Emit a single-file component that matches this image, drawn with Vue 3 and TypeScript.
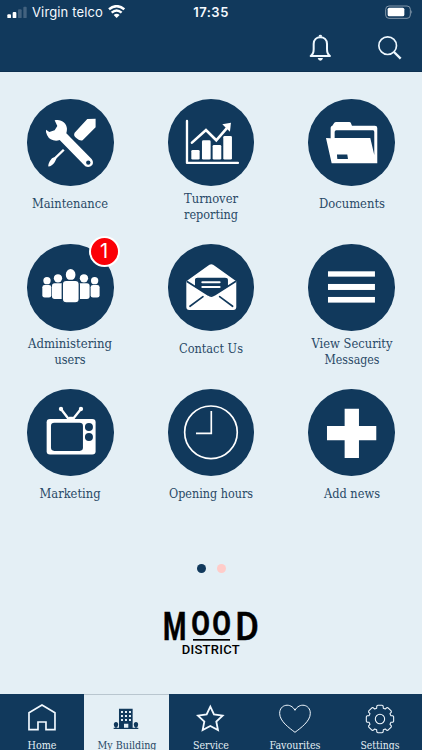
<script setup lang="ts">
interface Tile {
  id: string
  lines: string[]
  box: string
  widths: number[]
  badge?: number
}

interface Tab {
  id: string
  label: string
  box: string
  width: number
}

const tiles: Tile[] = [
  { id: 'maintenance', lines: ['Maintenance'], box: '81 27 260 260', widths: [76] },
  { id: 'turnover', lines: ['Turnover', 'reporting'], box: '81 27 260 260', widths: [54, 54] },
  { id: 'documents', lines: ['Documents'], box: '78 27 260 260', widths: [66] },
  { id: 'users', lines: ['Administering', 'users'], box: '81 37 260 260', widths: [84, 31], badge: 1 },
  { id: 'contact', lines: ['Contact Us'], box: '81 37 260 260', widths: [64] },
  { id: 'security', lines: ['View Security', 'Messages'], box: '78 37 260 260', widths: [81, 55] },
  { id: 'marketing', lines: ['Marketing'], box: '81 27 260 260', widths: [61] },
  { id: 'hours', lines: ['Opening hours'], box: '504 27 260 260', widths: [84] },
  { id: 'news', lines: ['Add news'], box: '291 27 260 260', widths: [56] },
]

const tabs: Tab[] = [
  { id: 'home', label: 'Home', box: '0 28 253 120', width: 29 },
  { id: 'building', label: 'My Building', box: '253 28 253 120', width: 59 },
  { id: 'service', label: 'Service', box: '506 28 253 120', width: 36 },
  { id: 'favourites', label: 'Favourites', box: '759 28 253 120', width: 51 },
  { id: 'settings', label: 'Settings', box: '1012 28 253 120', width: 39 },
]

const active = 'building'

const gear = (() => {
  const points: string[] = []
  const step = Math.PI / 4
  for (let i = 0; i < 8; i++) {
    const a = i * step
    const at = (r: number, o: number) =>
      `${(1138 + r * Math.sin(a + o)).toFixed(1)},${(103 - r * Math.cos(a + o)).toFixed(1)}`
    points.push(at(34, -0.3), at(40, -0.24), at(41.5, -0.16), at(41.5, 0.16), at(40, 0.24), at(34, 0.3))
  }
  return points.join(' ')
})()
</script>

<template>
  <div class="screen">
    <header>
      <div class="status">
        <div class="carrier">
          <svg class="signal" viewBox="22 16 60 38">
            <rect x="23" y="41" width="11" height="12" rx="3" fill="#fff" />
            <rect x="39" y="34" width="11" height="19" rx="3" fill="#fff" />
            <rect x="55" y="26" width="11" height="27" rx="3" fill="#43627f" />
            <rect x="71" y="18" width="10" height="35" rx="3" fill="#43627f" />
          </svg>
          <span>Virgin telco</span>
          <svg class="wifi" viewBox="325 14 52 40">
            <g fill="none" stroke="#fff" stroke-width="7.5">
              <path d="M328 27Q351 8 374 27" />
              <path d="M336 37Q351 24 366 37" />
            </g>
            <path d="M342 44Q351 37 360 44L351 53Z" fill="#fff" />
          </svg>
        </div>
        <span class="time">17:35</span>
        <svg class="battery" viewBox="530 14 84 42">
          <rect x="532" y="17" width="74" height="37" rx="10" fill="none" stroke="#8297aa" stroke-width="3" />
          <rect x="538" y="22" width="50" height="26" rx="5" fill="#fff" />
          <path d="M609 29Q614 35 609 41Z" fill="#8297aa" />
        </svg>
      </div>
      <div class="tools">
        <svg class="bell" viewBox="294 102 68 81" fill="none" stroke="#eef8ff" stroke-width="6">
          <path d="M299 168Q308 162 308 148V132C308 119 317 112 328 112S348 119 348 132V148Q348 162 357 168Z" stroke-linejoin="round" />
          <path d="M323 110V108Q323 104 328 104T333 108V110ZM320 174H336Q334 182 328 182T320 174Z" fill="#eef8ff" stroke="none" />
        </svg>
        <svg class="search" viewBox="498 105 75 76" fill="none" stroke="#eef8ff">
          <circle cx="530" cy="137" r="26.5" stroke-width="5" />
          <path d="M549 156L569 176" stroke-width="7" />
        </svg>
      </div>
    </header>

    <main>
      <section class="grid">
        <article v-for="t in tiles" :key="t.id" class="tile">
          <div class="disc">
            <svg :viewBox="t.box" fill="#fff">
              <template v-if="t.id === 'maintenance'">
                <path d="M164 91C183 86 200 99 201 116Q201 124 199 130L275 207Q282 216 277 225Q268 235 256 229L179 150Q170 154 160 151Q143 147 138 126V119L148 126L164 121L172 108Z" />
                <path d="M224 128L262 87L287 86V112L248 151Q240 154 230 145Q219 137 224 128Z" />
                <path d="M194 182L170 205L164 217Q156 229 145 230Q144 219 156 205L164 201L189 177Z" />
                <circle cx="265" cy="218" r="6.5" fill="#11395c" />
              </template>
              <template v-else-if="t.id === 'turnover'">
                <path d="M138 93V219H291" fill="none" stroke="#fff" stroke-width="7" stroke-linecap="round" stroke-linejoin="round" />
                <rect x="151" y="180" width="25" height="29" rx="4" />
                <rect x="183" y="151" width="26" height="58" rx="4" />
                <rect x="215" y="165" width="26" height="44" rx="4" />
                <rect x="247" y="138" width="26" height="71" rx="4" />
                <path d="M153 158L195 120L226 151L261 111" fill="none" stroke="#fff" stroke-width="8" stroke-linecap="round" />
                <path d="M244 103L270 98L267 125Z" />
              </template>
              <template v-else-if="t.id === 'documents'">
                <path d="M146 145V113Q146 109 151 107L156 100Q158 96 163 96H202Q206 96 207 100L210 107H279Q286 107 286 114V220H149L132 144ZM158 144H265L277 195V126Q277 122 273 121H163Q158 121 158 126Z" fill-rule="evenodd" />
                <path d="M165 194H196L198 207H166Z" fill="#11395c" />
              </template>
              <template v-else-if="t.id === 'users'">
                <circle cx="141" cy="147" r="11" /><circle cx="284" cy="147" r="11" />
                <circle cx="174" cy="140" r="12.5" /><circle cx="252" cy="140" r="12.5" />
                <ellipse cx="212" cy="129" rx="14.5" ry="17" />
                <rect x="127" y="160" width="27" height="38" rx="7" />
                <rect x="272" y="160" width="27" height="38" rx="7" />
                <rect x="156" y="155" width="38" height="47" rx="8" />
                <rect x="231" y="155" width="38" height="47" rx="8" />
                <rect x="187" y="146" width="51" height="68" rx="12" stroke="#11395c" stroke-width="4" />
              </template>
              <template v-else-if="t.id === 'contact'">
                <path d="M136 149L200 103Q211 93 222 103L286 149V226Q286 235 277 235H145Q136 235 136 226Z" />
                <path d="M137 149L202 190Q211 197 220 190L285 149" fill="none" stroke="#11395c" stroke-width="5" />
                <path d="M162 145Q162 138 170 138H252Q261 138 261 145V165L221 189Q211 196 201 189L162 165Z" fill="#11395c" />
                <path d="M184 152H236M184 166H236" stroke="#fff" stroke-width="6" stroke-linecap="round" />
                <path d="M186 195L147 224M236 195L275 224" stroke="#11395c" stroke-width="5" stroke-linecap="round" />
              </template>
              <template v-else-if="t.id === 'security'">
                <rect x="138" y="119" width="141" height="16" />
                <rect x="138" y="157" width="141" height="18" />
                <rect x="138" y="196" width="141" height="17" />
              </template>
              <template v-else-if="t.id === 'marketing'">
                <rect x="140" y="117" width="147" height="107" rx="10" />
                <rect x="153" y="128" width="96" height="85" rx="10" fill="#11395c" />
                <circle cx="267" cy="141" r="12" fill="#11395c" />
                <circle cx="267" cy="171" r="12" fill="#11395c" />
                <path d="M183 87L206 117M243 87L219 117" stroke="#fff" stroke-width="7" />
                <circle cx="183" cy="87" r="6.5" /><circle cx="243" cy="87" r="6.5" />
                <path d="M201 118L208 110H218L225 118Z" />
              </template>
              <template v-else-if="t.id === 'hours'">
                <circle cx="633" cy="157" r="79" fill="none" stroke="#fff" stroke-width="5" />
                <path d="M634 93V160H588" fill="none" stroke="#fff" stroke-width="5" />
              </template>
              <path v-else d="M401 86H444V138H496V181H444V234H401V181H348V138H401Z" />
            </svg>
            <span v-if="t.badge" class="badge">{{ t.badge }}</span>
          </div>
          <svg class="caption" :viewBox="`0 0 120 ${t.lines.length * 16}`" :class="{ single: t.lines.length === 1 }" :height="t.lines.length * 16">
            <text
              v-for="(line, i) in t.lines"
              :key="line"
              x="60"
              :y="11.8 + i * 16"
              text-anchor="middle"
              :textLength="t.widths[i]"
              lengthAdjust="spacingAndGlyphs"
            >{{ line }}</text>
          </svg>
        </article>
      </section>

      <div class="pager"><i class="current"></i><i></i></div>

      <svg class="brand" viewBox="66 177 294 144">
        <g class="wordmark">
          <text x="69" y="271" font-size="118" textLength="70" lengthAdjust="spacingAndGlyphs">M</text>
          <text x="154" y="254" font-size="97" textLength="56" lengthAdjust="spacingAndGlyphs">O</text>
          <text x="217" y="254" font-size="97" textLength="56" lengthAdjust="spacingAndGlyphs">O</text>
          <text class="light" x="286" y="271" font-size="118" textLength="71" lengthAdjust="spacingAndGlyphs">D</text>
        </g>
        <rect x="159" y="267" width="111" height="5" />
        <text class="district" x="125" y="311" font-size="39" textLength="174" lengthAdjust="spacing">DISTRICT</text>
      </svg>
    </main>

    <nav>
      <div v-for="tab in tabs" :key="tab.id" class="tab" :class="{ active: tab.id === active }">
        <svg class="glyph" :viewBox="tab.box" fill="none" stroke="#f2f9ff">
          <path v-if="tab.id === 'home'" d="M87 135V84L126 61L165 84V135H138V112H114V135Z" stroke-width="5" />
          <g v-else-if="tab.id === 'building'" fill="#11395c" stroke="none">
            <path d="M358 72H399V130H386V117H373V130H358Z" />
            <path d="M342 129H416V133H342ZM347 120H351V130H347ZM407 120H411V130H407Z" />
            <ellipse cx="349" cy="120" rx="6.5" ry="8" /><ellipse cx="409" cy="120" rx="6.5" ry="8" />
            <path d="M364 82H394M364 94H394M364 106H394" stroke="#e4eff5" stroke-width="6" stroke-dasharray="6 6" />
          </g>
          <path v-else-if="tab.id === 'service'" d="M630 66L641 89L667 93L648 111L653 136L630 124L607 136L612 111L593 93L619 89Z" stroke-width="5.5" />
          <path v-else-if="tab.id === 'favourites'" d="M885 143C868 130 839 110 839 86C839 58 873 53 885 77C897 53 931 58 931 86C931 110 902 130 885 143Z" stroke-width="3" />
          <g v-else stroke-width="3.2" stroke-linejoin="round">
            <polygon :points="gear" />
            <circle cx="1138" cy="103" r="14" />
          </g>
        </svg>
        <svg class="tab-label" viewBox="0 0 80 16">
          <text x="40" y="10.6" text-anchor="middle" :textLength="tab.width" lengthAdjust="spacingAndGlyphs">{{ tab.label }}</text>
        </svg>
      </div>
    </nav>
  </div>
</template>

<style>
body {
  margin: 0;
  overflow: hidden;
}
</style>

<style scoped>
.screen {
  display: flex;
  flex-direction: column;
  height: 100vh;
  overflow: hidden;
  background: #e4eff5;
  color: #11395c;
}
svg {
  display: block;
  flex: none;
}
header {
  box-sizing: border-box;
  height: 72px;
  background: #11395c;
  border-bottom: 1px solid #0d3050;
  color: #f5faff;
  font-family: Inter, sans-serif;
}
.status {
  display: grid;
  grid-template-columns: 1fr auto 1fr;
  align-items: center;
  height: 24px;
  padding: 0 9px 0 7px;
}
.carrier {
  display: flex;
  align-items: center;
  gap: 5px;
  font-size: 13px;
  letter-spacing: 0.13px;
  white-space: nowrap;
}
.signal {
  width: 20px;
  height: 12.7px;
}
.wifi {
  width: 17.3px;
  height: 13.3px;
}
.time {
  font-size: 13px;
  font-weight: 600;
  letter-spacing: 0.5px;
  margin-left: 2px;
}
.battery {
  width: 28px;
  height: 14px;
  justify-self: end;
}
.tools {
  display: flex;
  justify-content: flex-end;
  align-items: center;
  gap: 45px;
  height: 47px;
  padding-right: 20px;
}
.bell {
  width: 22.7px;
  height: 27px;
}
.search {
  width: 25px;
  height: 25.3px;
}
main {
  flex: 1;
  display: flex;
  flex-direction: column;
  align-items: center;
}
.grid {
  display: grid;
  grid-template-columns: repeat(3, 1fr);
  grid-auto-rows: 145px;
  width: 100%;
  padding-top: 27px;
}
.tile {
  display: flex;
  flex-direction: column;
  align-items: center;
}
.disc {
  position: relative;
  width: 86.6px;
  height: 86.6px;
  border-radius: 50%;
  background: #11395c;
}
.disc svg {
  width: 100%;
  height: 100%;
}
.badge {
  position: absolute;
  top: -8px;
  right: -6px;
  box-sizing: border-box;
  width: 31px;
  height: 31px;
  border: 2px solid #fff;
  border-radius: 50%;
  background: #fb0007;
  color: #fff;
  font: 20px/27px Inter, sans-serif;
  text-align: center;
}
.caption {
  width: 120px;
  margin-top: 5px;
}
.caption.single {
  margin-top: 10px;
}
.caption text,
.tab-label text {
  font-family: 'DejaVu Serif Condensed', 'DejaVu Serif', serif;
  font-size: 12.4px;
  font-stretch: condensed;
  fill: #294966;
}
.pager {
  display: flex;
  gap: 11px;
  margin-top: 29.5px;
}
.pager i {
  width: 9px;
  height: 9px;
  border-radius: 50%;
  background: #ffccc9;
}
.pager .current {
  background: #11395c;
}
.brand {
  width: 98px;
  height: 48px;
  margin-top: 36.5px;
  overflow: visible;
}
.brand text {
  font-family: Roboto, sans-serif;
  font-weight: 700;
}
.wordmark {
  stroke: #000;
  stroke-width: 1.5px;
}
.brand .light {
  font-weight: 500;
}
.brand .district {
  font-weight: 500;
}
nav {
  display: grid;
  grid-template-columns: repeat(5, 1fr);
  height: 56px;
  background: #11395c;
}
.tab {
  display: flex;
  flex-direction: column;
  align-items: center;
  overflow: hidden;
}
.tab.active {
  background: #e4eff5;
  border-top: 1px solid #b9c6cf;
}
.tab.active .glyph {
  margin-top: -1px;
}
.glyph {
  width: 84.3px;
  height: 40px;
}
.tab-label {
  width: 80px;
  height: 16px;
  margin-top: 3.5px;
}
.tab-label text {
  font-size: 10.4px;
  fill: #e4eff5;
}
.tab.active text {
  fill: #294966;
}
</style>
